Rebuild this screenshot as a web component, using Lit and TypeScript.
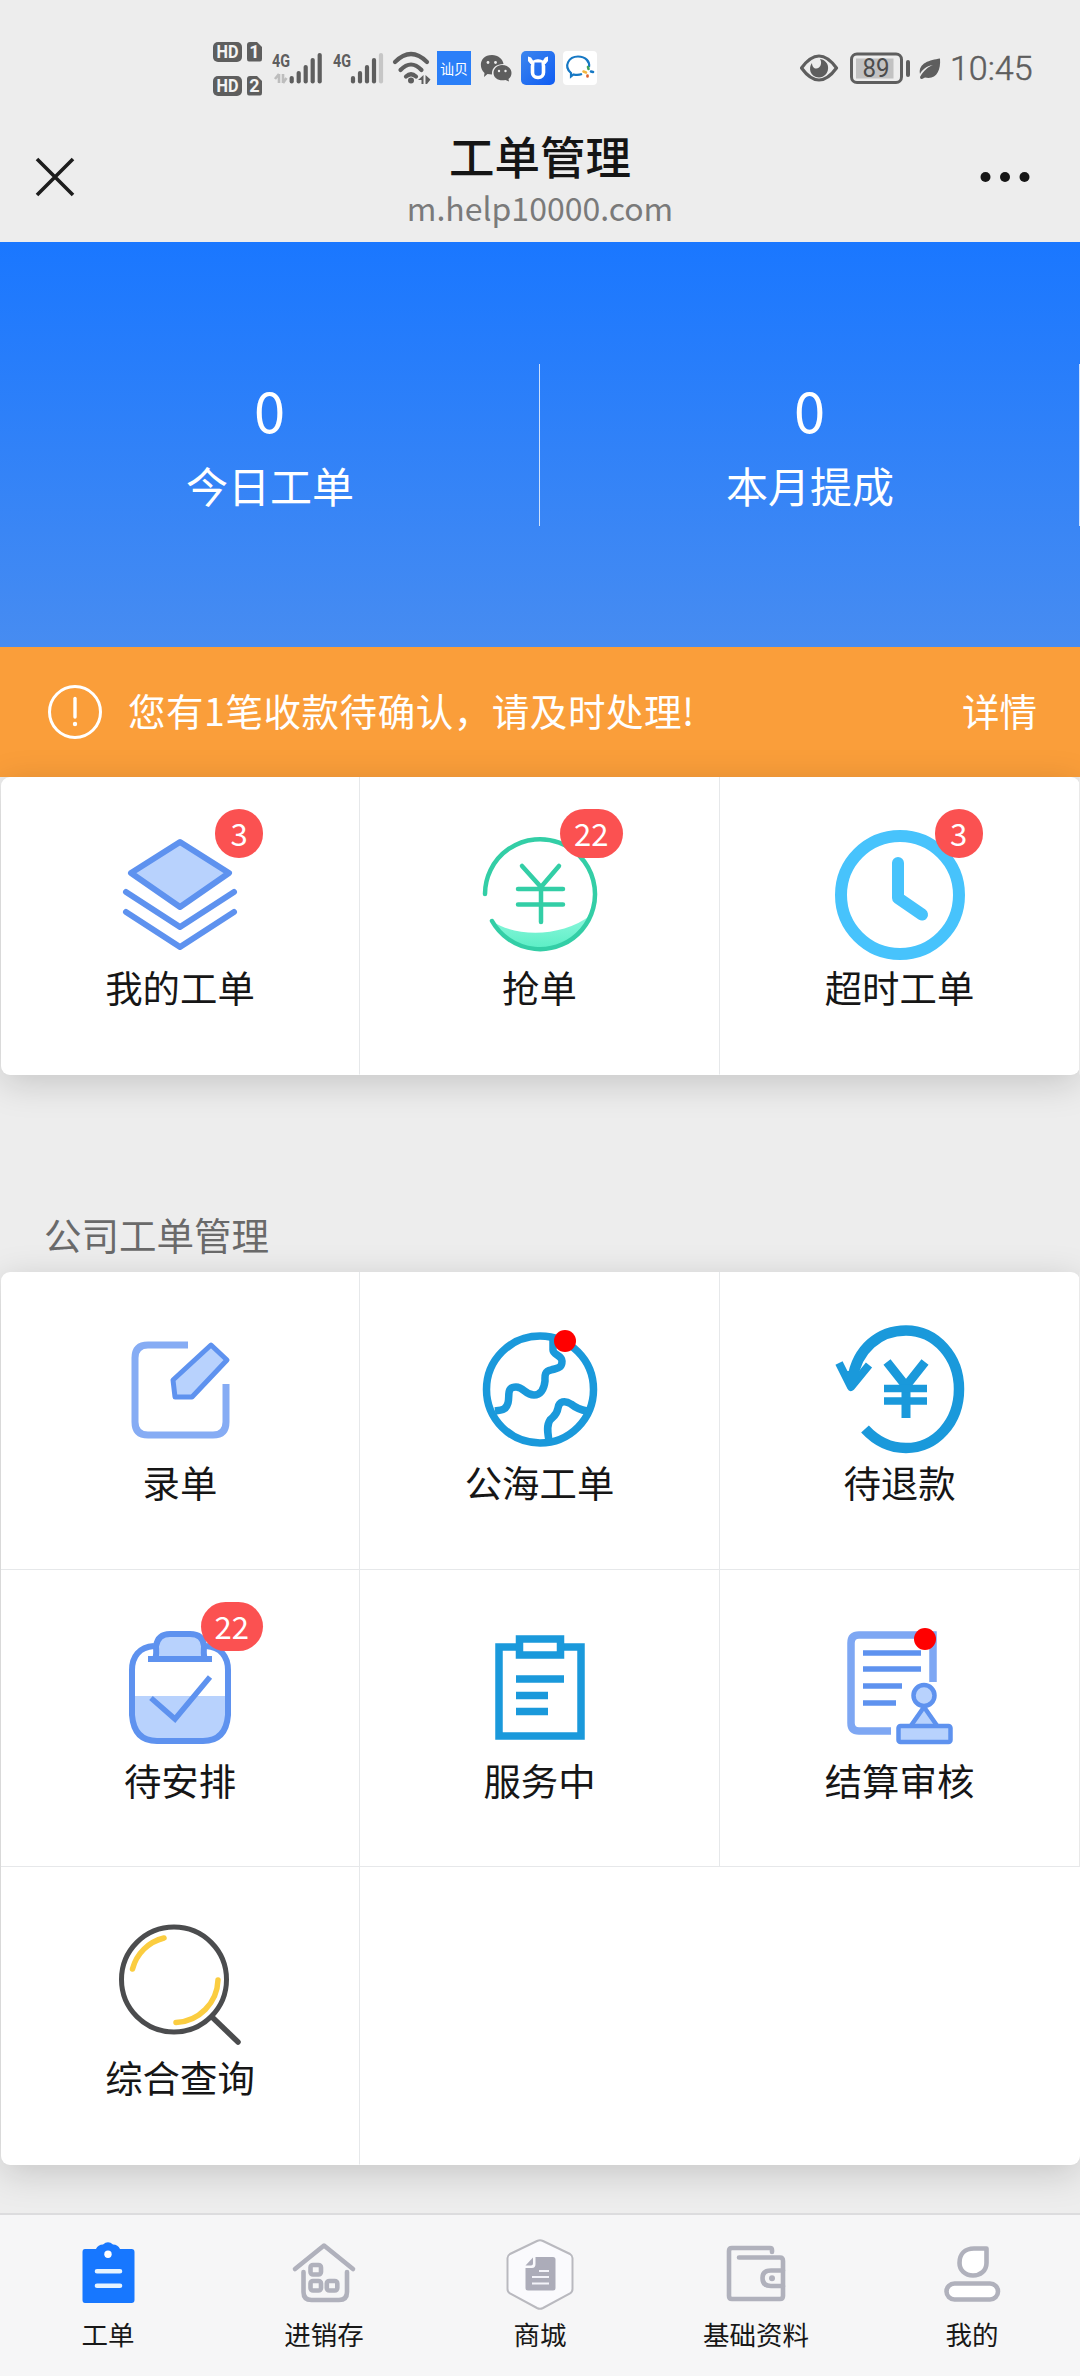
import { LitElement, html, css, svg, nothing, type TemplateResult } from "lit";
import { customElement, property } from "lit/decorators.js";

type Art = ReturnType<typeof svg>;

interface Entry {
  label: string;
  art: Art;
  count?: number;
  dot?: boolean;
}

const BLUE = "#5e92ef";
const PALE = "#b8d2fd";
const CYAN = "#1a99db";
const GREY = "#b0b1bc";

const layers = svg`
  <g fill="none" stroke=${BLUE} stroke-width="6" stroke-linejoin="round" stroke-linecap="round">
    <path d="M65 12 L114 43 L65 77 L16 43 Z" fill=${PALE}/>
    <path d="M11 62 L65 97 L119 62"/>
    <path d="M11 82 L65 117 L119 82"/>
  </g>`;

const grab = svg`
  <defs><linearGradient id="mint" x1="0" y1="0" x2="0" y2="1">
    <stop offset="0" stop-color="#8df7dd"/><stop offset="1" stop-color="#5beec5"/></linearGradient></defs>
  <path d="M17 91 C40 107 86 108 116 85 C108 105 90 119 65 119 C44 119 26 109 17 91Z" fill="url(#mint)"/>
  <g fill="none" stroke="#33cea6" stroke-width="4.5" stroke-linecap="round">
    <path d="M10 64 A55 55 0 1 1 17 91"/>
    <path d="M47 36 L66 57 L84 36 M66 57 V92 M43 59 H88 M43 74.5 H88"/>
  </g>`;

const clock = svg`
  <g fill="none" stroke="#47c3fc" stroke-width="12" stroke-linecap="round" stroke-linejoin="round">
    <circle cx="65" cy="65" r="59"/>
    <path d="M63 33 V68 L87 84.5"/>
  </g>`;

const edit = svg`
  <path d="M73 20 H33 Q20 20 20 33 V97 Q20 110 33 110 H98 Q111 110 111 97 V59" fill="none" stroke="#86acf4" stroke-width="7"/>
  <path d="M96 20 L112 35 L77 72 H60 L58 55 Z" fill=${PALE} stroke=${BLUE} stroke-width="5" stroke-linejoin="round"/>`;

const globe = svg`
  <g fill="none" stroke=${CYAN} stroke-width="7.500" stroke-linejoin="round">
    <circle cx="65" cy="64.500" r="53.500"/>
    <path d="M78 12 V25 C78 30 87 30 87 36 C87 44 82 43 76 45 C69 46 70 52 70 56 C69 65 65 70 59 70 C50 70 49 62 41 62 C31 62 35 71 33 78 C31 85 27 85 20 86"/>
    <path d="M74 116 C73 109 71 101 75 95 C79 91 82 90 83 83 C84 76 90 75 96 79 C101 83 106 85 112 86"/>
  </g>`;

const refund = svg`
  <g fill="none" stroke=${CYAN} stroke-width="10.500">
    <path d="M17.500 54 C22 24 44 5.500 71 5.500 C101 5.500 124 32 124 64 C124 97 101 123 71 123 C55 123 42 117 30 104"/>
    <path d="M52 37 L71 61 L90 37 M71 60 V93" stroke-width="9"/>
    <path d="M49 63.500 H92 M49 76 H92" stroke-width="7.500"/>
  </g>
  <path d="M4 38 L16 62 L34 40" fill="none" stroke=${CYAN} stroke-width="8" stroke-linejoin="round"/>
  <path d="M9 46 H28 L16 64Z" fill=${CYAN}/>`;

const arrange = svg`
  <path d="M17 73 H113 V92 Q111 118 88 118 H42 Q19 118 17 92Z" fill=${PALE}/>
  <g fill="none" stroke=${BLUE} stroke-width="6">
    <path d="M39 23 C24 24 17 34 17 47 V92 Q19 118 42 118 H88 Q111 118 113 92 V47 C113 34 106 24 91 23"/>
    <path d="M40 36 C42 32 41 27 41 23 Q43 11 55 11 H75 Q88 11 89 23 C89 27 88 32 90 36Z" fill=${PALE}/>
    <path d="M33 36 H97"/>
    <path d="M36 75 L60 96 L95 54" stroke-width="5.500"/>
  </g>`;

const service = svg`
  <g fill="none" stroke=${CYAN} stroke-width="7.500">
    <path d="M41 24 H24 V113 H106 V24 H89"/>
    <path d="M44.500 16 H85.500 V32 H44.500Z"/>
    <path d="M41 56 H89 M41 72.500 H73 M41 88.500 H73"/>
  </g>`;

const audit = svg`
  <g fill="none" stroke=${BLUE}>
    <path d="M98 59 V12 H24 Q16 12 16 20 V100 Q16 108 24 108 H56" stroke="#7ea7f3" stroke-width="7.500"/>
    <path d="M28 30 H86 M28 46 H86 M28 63 H67 M28 80 H61" stroke-width="5.500"/>
    <g fill=${PALE} stroke-width="4.500" stroke-linejoin="round">
      <path d="M89 84 L75 104 H103Z"/>
      <circle cx="89" cy="72.500" r="10.500"/>
      <rect x="63.500" y="103" width="52" height="16" rx="2"/>
    </g>
  </g>`;

const search = svg`
  <g fill="none" stroke-linecap="round" stroke="#4b4c4e" stroke-width="5">
    <circle cx="59" cy="59.500" r="52.500"/>
    <path d="M97 97 L123 122" stroke-width="5.500"/>
    <path d="M17.500 49 A43 43 0 0 1 49 18 M103 60 A44 44 0 0 1 61 102.500" stroke="#fbcd40" stroke-width="5.500"/>
  </g>`;

const tabOrders = svg`
  <path d="M13 11 H24 Q26 6.500 31 6.500 Q36 2 41 6.500 Q46 6.500 48 11 H59.500 Q62.500 11 62.500 14 V62 Q62.500 65 59.500 65 H13 Q10.500 65 10.500 62 V14 Q10.500 11 13 11Z" fill="#1777ff"/>
  <circle cx="36" cy="16.200" r="3.700" fill="#fff"/>
  <path d="M25 33.200 H48 M25 47.800 H48" stroke="#e6f3ff" stroke-width="4.600" stroke-linecap="round"/>`;

const tabStock = svg`
  <g fill="none" stroke=${GREY} stroke-width="4.600" stroke-linecap="round" stroke-linejoin="round">
    <path d="M7 31 L36 7.500 L65 31"/>
    <path d="M15.500 34 V54 Q15.500 62 23.500 62 H51 Q59 62 59 54 V34"/>
    <rect x="22.500" y="27" width="10.500" height="9.500" rx="2.500"/>
    <rect x="22.500" y="43" width="10.500" height="9.500" rx="2.500"/>
    <rect x="38.800" y="43" width="10.500" height="9.500" rx="2.500"/>
  </g>`;

const tabMall = svg`
  <path d="M33 3 Q36 1.500 39 3 L66 16 Q68.500 17.500 68.500 20 V51 Q68.500 54 66 55.500 L39 70 Q36 71.500 33 70 L6 55.500 Q3.500 54 3.500 51 V20 Q3.500 17.500 6 16Z" fill="#fafafd" stroke="#b9b9bf" stroke-width="2"/>
  <path d="M31.500 19 H49 Q51.500 19 51.500 21.500 V50 Q51.500 52.500 49 52.500 H24 Q21.500 52.500 21.500 50 V30 H28 Q31.500 30 31.500 26Z M29 19.500 V25.500 Q29 27.500 27 27.500 H21.500Z" fill="#acacb9"/>
  <path d="M35 33 H45 M28 39 H45 M28 45.500 H45" stroke="#f3f3fa" stroke-width="2.200"/>`;

const tabData = svg`
  <g fill="none" stroke=${GREY} stroke-width="4.600" stroke-linecap="round" stroke-linejoin="round">
    <path d="M52 14 V12 Q52 10 50 10 H12 Q9 10 9 13 V58 Q9 61 12 61 H60 Q63 61 63 58 V23 Q63 19.500 60 19.500 H19"/>
    <path d="M63 32.500 H51 Q42.500 32.500 42.500 40 Q42.500 48 51 48 H63"/>
  </g>
  <circle cx="52" cy="40.200" r="3" fill=${GREY}/>`;

const tabMine = svg`
  <g fill="#fff" stroke=${GREY} stroke-width="4.600" stroke-linejoin="round">
    <path d="M50.500 10.500 V25 C50.500 33 44 37.500 37 37.500 C29 37.500 23.500 32 23.500 25 C23.500 16 29 10.500 38 10.500Z"/>
    <rect x="10.500" y="45.500" width="51.500" height="16" rx="8"/>
  </g>`;

const FONT = css`"Noto Sans CJK SC", "Noto Sans", sans-serif`;

@customElement("status-bar")
class StatusBar extends LitElement {
  static styles = css`
    :host { display: flex; justify-content: space-between; align-items: flex-start; height: 125px;
      padding: 38px 46px 0 212px; box-sizing: border-box; color: #5e5e5e; font-family: ${FONT}; }
    .side { display: flex; align-items: center; height: 60px; }
    svg { display: block; flex: none; }
    .sim { margin-right: 8px; }
    .app { width: 34px; height: 34px; display: flex; align-items: center; justify-content: center; }
    .shell { background: #2b7ff8; color: #fff; font-size: 14px; line-height: 34px; margin: 0 9px 0 6px; }
    .time { font-family: Roboto, sans-serif; font-size: 34px; font-weight: 300; -webkit-text-stroke: .5px #5e5e5e; line-height: 62px; margin-left: 9px; width: 84px; }
    svg text { font-family: Roboto, "Noto Sans", sans-serif; }
  `;

  private hd(n: number, y: number) {
    return svg`
      <rect x="1" y=${y} width="29" height="20" rx="5" fill="#5e5e5e"/>
      <text x="4.500" y=${y + 16.3} font-size="18" font-weight="700" textLength="22" lengthAdjust="spacingAndGlyphs" fill="#f4f4f4">HD</text>
      <path d=${`M38 ${y} H45 L50 ${y + 5} V${y + 17} Q50 ${y + 19.5} 48 ${y + 19.5} H37 Q35 ${y + 19.5} 35 ${y + 17} V${y + 3} Q35 ${y} 38 ${y}Z`} fill="#5e5e5e"/>
      <text x="42.500" y=${y + 16.3} font-size="18" font-weight="700" text-anchor="middle" fill="#f4f4f4">${n}</text>`;
  }

  private signal(x: number, weak: boolean) {
    const tops = [38, 33, 27, 20, 15];
    return tops.map((t, i) => svg`<path d=${`M${x + i * 7} ${t + 2} V43.500`} stroke=${weak && i === 4 ? "#c6c6c6" : "#5e5e5e"} stroke-width="4.200" stroke-linecap="round"/>`);
  }

  render() {
    return html`
      <div class="side">
        <svg class="sim" width="52" height="60" viewBox="0 0 52 60">${this.hd(1, 4)}${this.hd(2, 38)}</svg>
        <svg width="112" height="60" viewBox="272 0 112 60">
          <text x="272" y="28.500" font-size="19" font-weight="700" textLength="18" lengthAdjust="spacingAndGlyphs" fill="#5e5e5e">4G</text>
          <path d="M279 36 V45 M279 36 L275 41 M283 45 V36 M283 45 L286.500 40" fill="none" stroke="#bdbdbd" stroke-width="2.600"/>
          ${this.signal(291.7, false)}
          <text x="333" y="28.500" font-size="19" font-weight="700" textLength="18" lengthAdjust="spacingAndGlyphs" fill="#5e5e5e">4G</text>
          ${this.signal(353, true)}
        </svg>
        <svg width="47" height="60" viewBox="384 0 47 60">
          <g fill="none" stroke="#5e5e5e" stroke-width="4.200" stroke-linecap="round">
            <path d="M395 24 Q411 8 427 24 M400.500 32 Q411 21 421.500 32 M406 38.500 Q411 34 416 38.500"/>
          </g>
          <circle cx="411" cy="42.500" r="3" fill="#5e5e5e"/>
          <path d="M423.500 37 V46 H421.500 V42 H418Z M425.500 37 L430.500 41.500 L427 46 H425.500Z" fill="#5e5e5e"/>
        </svg>
        <div class="app shell">讪贝</div>
        <svg width="32" height="60" viewBox="480 0 32 60" fill="#5e5e5e">
          <path d="M492 17 C498 17 503 21 503.500 26 C496 26 491.500 30 492 36.500 L487.500 36 L484 39 L484.500 35 C478 29 480 17 492 17Z"/>
          <path d="M502 27 C508 27 511.500 31 511.500 35 C511.500 38 510 40 508.500 41 L509 43.500 L505.500 42 C499 43.500 493.500 40 493.500 35 C493.500 31 497 27 502 27Z"/>
          <g fill="#ededed"><circle cx="488" cy="24.500" r="1.400"/><circle cx="495.500" cy="24.500" r="1.400"/><circle cx="499" cy="33" r="1.200"/><circle cx="505.500" cy="33" r="1.200"/></g>
        </svg>
        <svg width="85" height="60" viewBox="512 0 85 60">
          <defs><linearGradient id="ox" x1="0" y1="0" x2="1" y2="1"><stop offset="0" stop-color="#3c86ee"/><stop offset="1" stop-color="#0f5cf3"/></linearGradient></defs>
          <rect x="521" y="13" width="34" height="34" rx="5" fill="url(#ox)"/>
          <rect x="532.500" y="23" width="11" height="16.500" rx="5" fill="none" stroke="#fff" stroke-width="3.600"/>
          <path d="M528 18.500 L531 19.500 L533 22.500 H543 L545 19.500 L548 18.500 V23 L545.500 26 H530.500 L528 23Z" fill="#fff"/>
          <path d="M534.500 25.500 H541.500" stroke="#2a70ef" stroke-width="2"/>
          <rect x="563" y="13" width="34" height="34" rx="4" fill="#fff"/>
          <path d="M582 36 C578 37.500 576 37 573.500 36.500 L571 38.500 V35 C563 28 569 18.500 578 18.500 C586 18.500 590 24 589 29" fill="none" stroke="#1678c4" stroke-width="2.200"/>
          <g fill="none" stroke-width="2.600" stroke-linecap="round"><path d="M588 29 L588.500 31" stroke="#42a35c"/><path d="M591 33.500 L593 34" stroke="#1678c4"/><path d="M587.500 37.500 V38.500" stroke="#e06430"/><path d="M583.500 33.500 L586 34.500" stroke="#f2b640"/></g>
        </svg>
      </div>
      <div class="side">
        <svg width="141" height="60" viewBox="800 0 141 60">
          <path d="M801.500 30 Q819 6 836.500 30 Q819 54 801.500 30Z" fill="none" stroke="#5e5e5e" stroke-width="3.200" stroke-linejoin="round"/>
          <path d="M820 21 C832 23 830 39 819 39.500 C810 39 808 30 812 25 C812 30 816 32 819 29.500 C821 28 822 24 820 21Z" fill="#5e5e5e"/>
          <rect x="851.500" y="16" width="50" height="28.500" rx="5.500" fill="none" stroke="#5e5e5e" stroke-width="3"/>
          <rect x="856" y="20.500" width="37.500" height="20" fill="#c2c2c2"/>
          <text x="862.500" y="39" font-size="25" textLength="27" lengthAdjust="spacingAndGlyphs" fill="#4c4c4c">89</text>
          <path d="M908 24 V37" stroke="#5e5e5e" stroke-width="4" stroke-linecap="round"/>
          <path d="M940 20.500 C941 33 936 42 925 39.500 L922 41 Q920 41.500 920 39 C924 32 928 29 933 27 C926 28 922 32 920 36 C918 25 930 22 940 20.500Z" fill="#5e5e5e"/>
        </svg>
        <div class="time">10:45</div>
      </div>`;
  }
}

@customElement("title-bar")
class TitleBar extends LitElement {
  static styles = css`
    :host { display: grid; grid-template-columns: 150px 1fr 150px; height: 117px; font-family: ${FONT}; }
    .side { display: flex; height: 104px; align-items: center; padding-left: 35px; }
    .side.more { padding: 0 50px 0 0; justify-content: flex-end; }
    .text { text-align: center; }
    .name { font-size: 45.5px; font-weight: 500; line-height: 60px; color: #151515; }
    .host { font-size: 32px; line-height: 45px; color: #7a7a7a; }
  `;
  render() {
    return html`
      <div class="side"><svg width="40" height="40" viewBox="0 0 40 40"><path d="M2 2 L38 38 M38 2 L2 38" stroke="#1d1d1d" stroke-width="3.600"/></svg></div>
      <div class="text"><div class="name">工单管理</div><div class="host">m.help10000.com</div></div>
      <div class="side more"><svg width="50" height="12" viewBox="0 0 50 12" fill="#161616"><circle cx="5.500" cy="6" r="5"/><circle cx="25" cy="6" r="5"/><circle cx="44.500" cy="6" r="5"/></svg></div>`;
  }
}

@customElement("entry-grid")
class EntryGrid extends LitElement {
  @property({ attribute: false }) entries: Entry[] = [];
  static styles = css`
    :host { display: block; font-family: ${FONT}; }
    .card { display: grid; grid-template-columns: 359px 360px 1fr; background: #fff; border-radius: 9px; margin: 0 0 0 1px;
      box-shadow: 0 8px 36px rgba(0, 0, 0, .17); }
    .cell { height: 297.5px; box-sizing: border-box; padding-top: 53px; border-right: 1px solid #e6e8ea; border-bottom: 1px solid #e6e8ea;
      display: flex; flex-direction: column; align-items: center; }
    .cell.last { border-bottom-color: transparent; }
    .cell:nth-child(3n) { border-right-color: #e9e9e9; }
    .pic { position: relative; width: 130px; height: 130px; }
    .pic svg { display: block; overflow: hidden; }
    .count { position: absolute; right: -18px; top: -21px; min-width: 48px; height: 49px; border-radius: 25px; padding: 0 14px;
      box-sizing: border-box; background: #fb5151; color: #fff; font-size: 31px; line-height: 47px; text-align: center; }
    .dot { position: absolute; left: 79px; top: 5px; width: 22px; height: 22px; border-radius: 50%; background: #f00; }
    .label { font-size: 37.4px; line-height: 54px; color: #161616; white-space: nowrap; }
  `;
  render() {
    const lastRow = Math.floor((this.entries.length - 1) / 3) * 3;
    return html`<div class="card">${this.entries.map((e, i) => html`
      <div class="cell ${i >= lastRow ? "last" : ""}">
        <div class="pic">
          <svg width="130" height="130" viewBox="0 0 130 130">${e.art}</svg>
          ${e.count ? html`<span class="count">${e.count}</span>` : nothing}
          ${e.dot ? html`<span class="dot"></span>` : nothing}
        </div>
        <div class="label">${e.label}</div>
      </div>`)}</div>`;
  }
}

@customElement("app-root")
class AppRoot extends LitElement {
  static styles = css`
    :host { display: flex; flex-direction: column; width: 1080px; height: 2376px; background: #ededed; overflow: hidden;
      font-family: ${FONT}; }
    .hero { height: 405px; box-sizing: border-box; padding-top: 122px; background: linear-gradient(#1a77ff, #478cf1);
      display: grid; grid-template-columns: 1fr 1fr; color: #fff; text-align: center; }
    .stat { height: 162px; border-right: 1px solid rgba(255, 255, 255, .75); }
    .num { font-size: 56px; line-height: 80px; padding: 5px 0 4px; }
    .cap { font-size: 42px; line-height: 64px; padding-left: 1px; }
    .notice { height: 130px; display: flex; align-items: center; padding: 0 43px 0 48px; box-sizing: border-box;
      background: #fa9e3a; color: #fff; font-size: 37.5px; }
    .notice svg { display: block; margin-right: 26px; }
    .notice .msg { flex: 1; white-space: nowrap; letter-spacing: .55px; padding-bottom: 5px; }
    .notice .more { padding-bottom: 5px; }
    .section { margin-top: 133px; height: 64.5px; line-height: 51px; padding-left: 44px; font-size: 37.5px; color: #6a6a6a; }
    .tabs { margin-top: auto; height: 163px; box-sizing: border-box; border-top: 2px solid #dcdcde; background: #f6f6f7;
      display: grid; grid-template-columns: repeat(5, 1fr); }
    .tab { display: flex; flex-direction: column; align-items: center; padding-top: 23px; font-size: 26.5px; line-height: 48px; color: #181818; }
    .tab svg { display: block; }
  `;

  private first: Entry[] = [
    { label: "我的工单", art: layers, count: 3 },
    { label: "抢单", art: grab, count: 22 },
    { label: "超时工单", art: clock, count: 3 },
  ];
  private second: Entry[] = [
    { label: "录单", art: edit },
    { label: "公海工单", art: globe, dot: true },
    { label: "待退款", art: refund },
    { label: "待安排", art: arrange, count: 22 },
    { label: "服务中", art: service },
    { label: "结算审核", art: audit, dot: true },
    { label: "综合查询", art: search },
  ];
  private tabs: Entry[] = [
    { label: "工单", art: tabOrders },
    { label: "进销存", art: tabStock },
    { label: "商城", art: tabMall },
    { label: "基础资料", art: tabData },
    { label: "我的", art: tabMine },
  ];

  private stat(value: string, caption: string): TemplateResult {
    return html`<div class="stat"><div class="num">${value}</div><div class="cap">${caption}</div></div>`;
  }

  render() {
    return html`
      <status-bar></status-bar>
      <title-bar></title-bar>
      <div class="hero">${this.stat("0", "今日工单")}${this.stat("0", "本月提成")}</div>
      <div class="notice">
        <svg width="54" height="54" viewBox="0 0 54 54"><circle cx="27" cy="27" r="25.500" fill="none" stroke="#fff" stroke-width="3"/>
          <path d="M27 13.500 V32" stroke="#fff" stroke-width="3.400" stroke-linecap="round"/><circle cx="27" cy="39" r="2.200" fill="#fff"/></svg>
        <div class="msg">您有1笔收款待确认，请及时处理!</div>
        <div class="more">详情</div>
      </div>
      <entry-grid .entries=${this.first}></entry-grid>
      <div class="section">公司工单管理</div>
      <entry-grid .entries=${this.second}></entry-grid>
      <div class="tabs">${this.tabs.map((t) => html`
        <div class="tab"><svg width="72" height="72" viewBox="0 0 72 72">${t.art}</svg><div>${t.label}</div></div>`)}</div>`;
  }
}
